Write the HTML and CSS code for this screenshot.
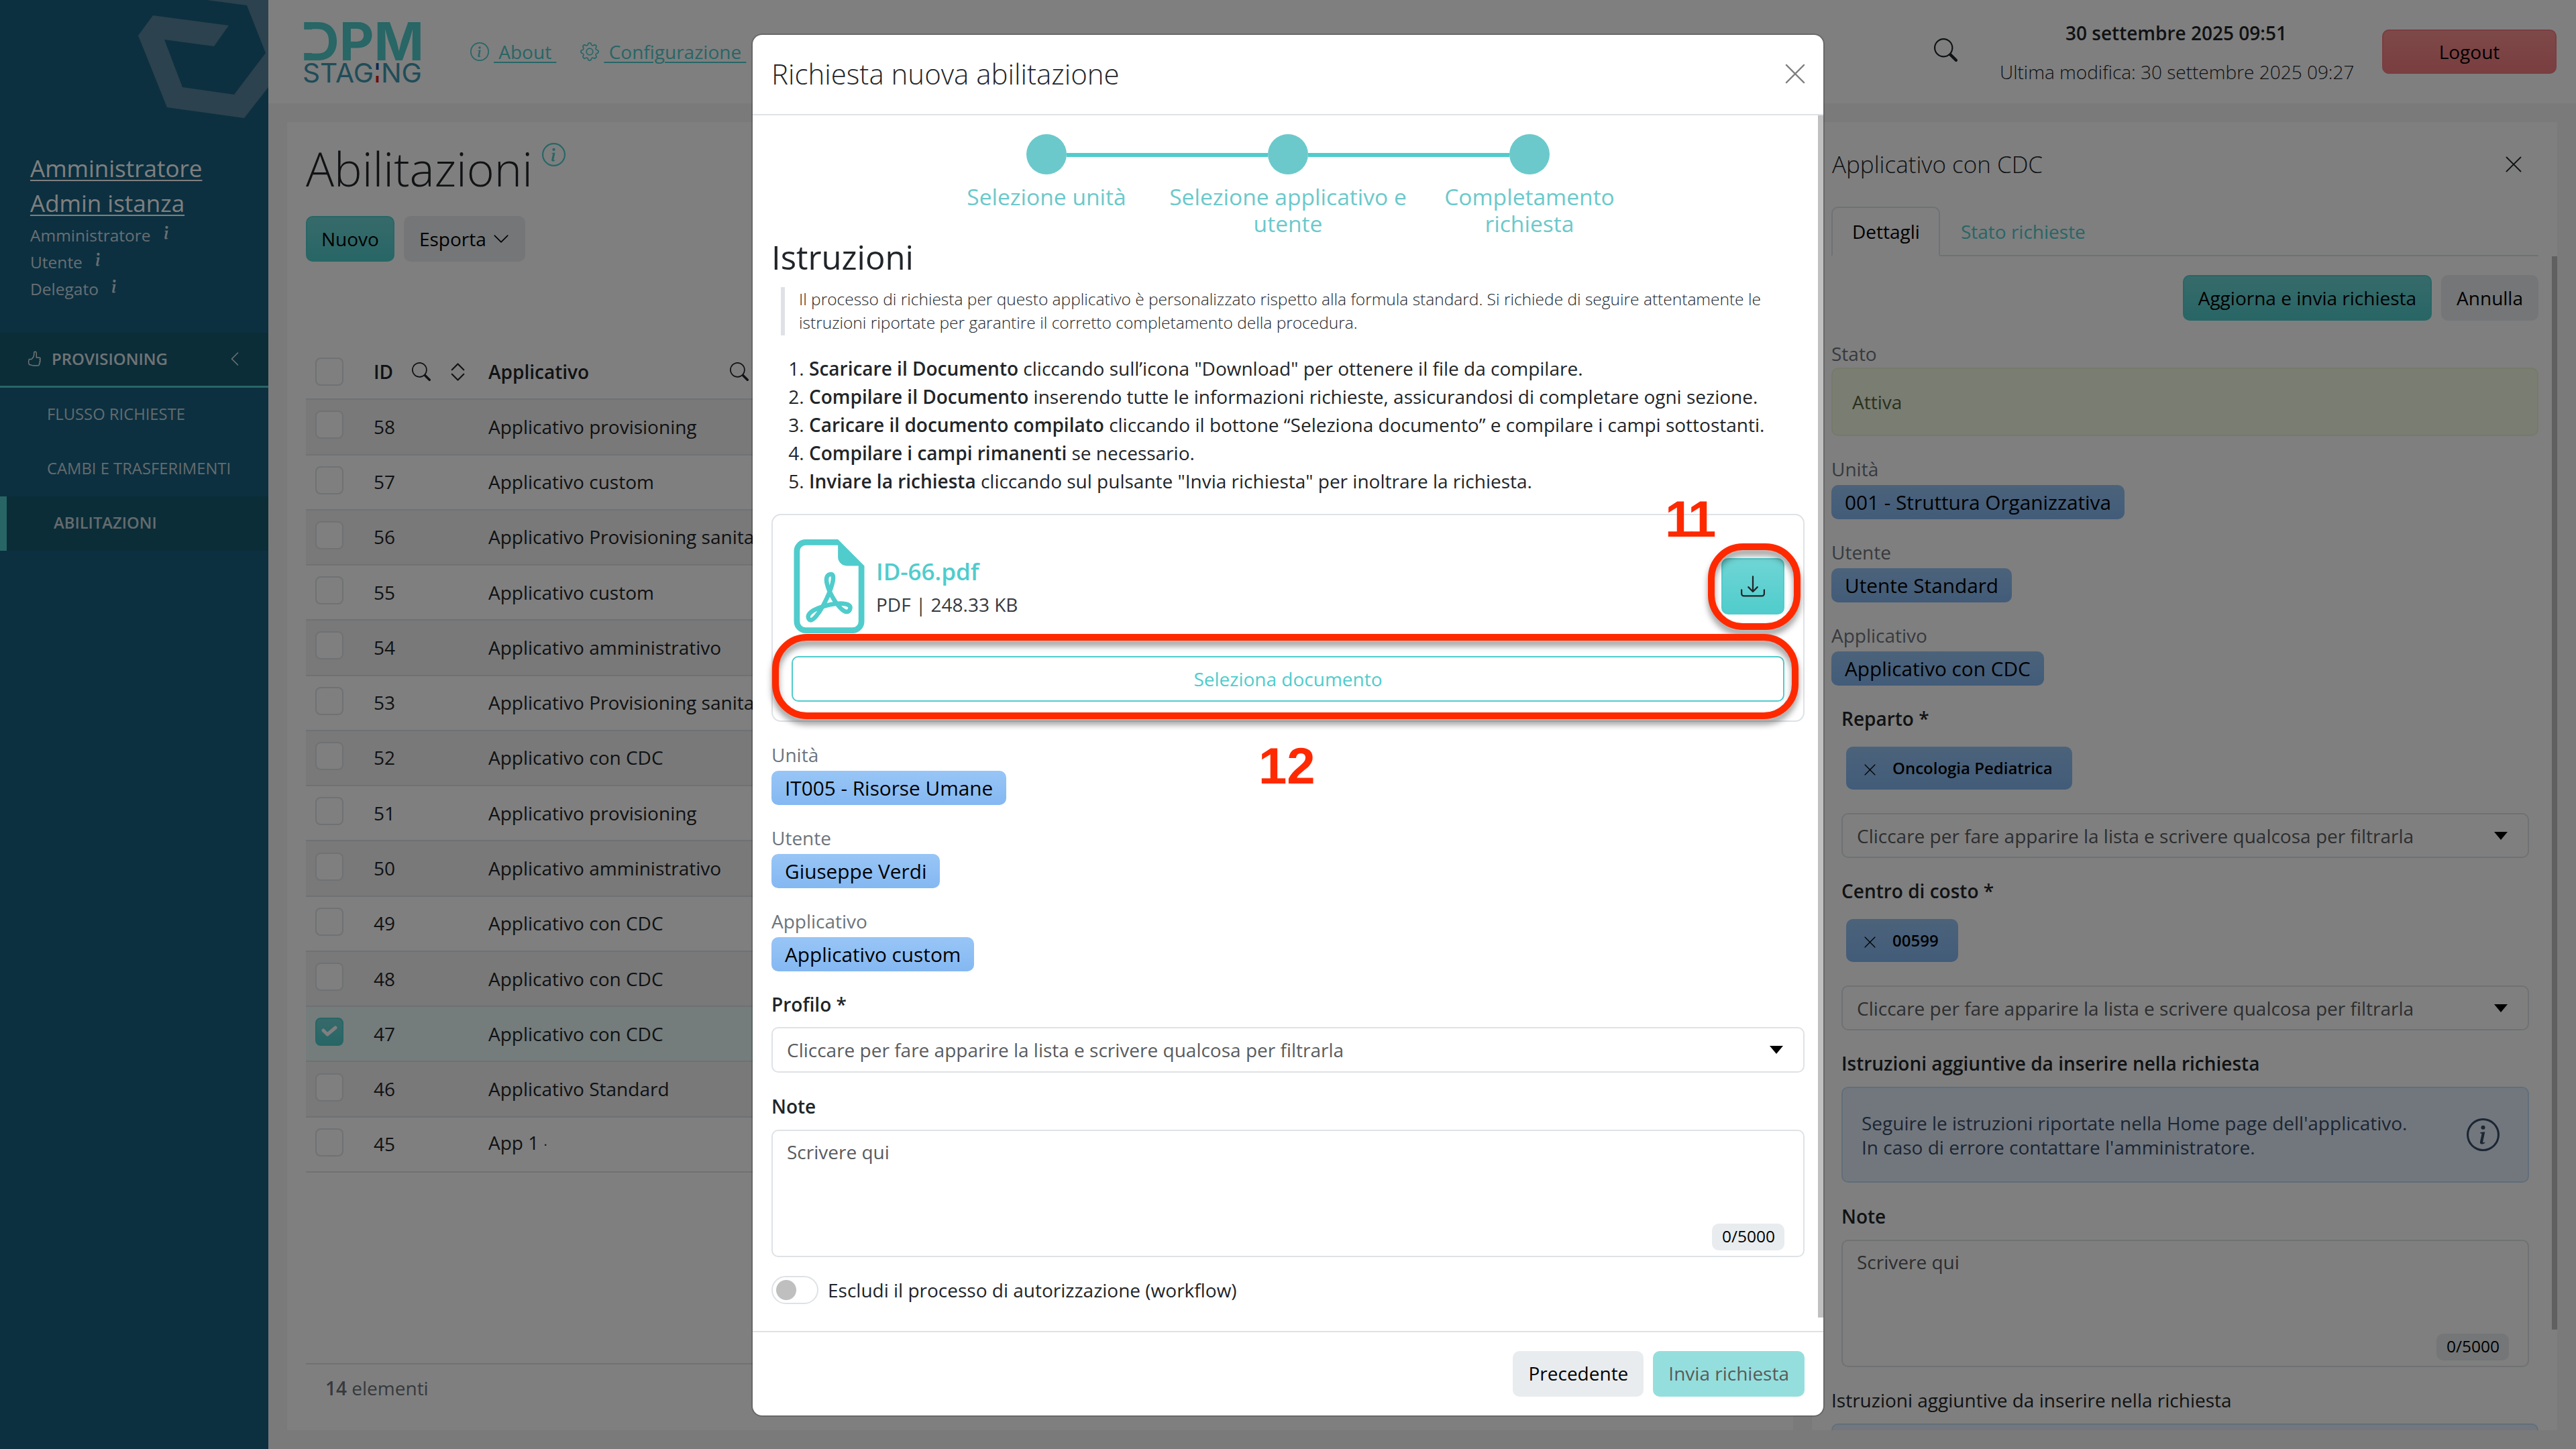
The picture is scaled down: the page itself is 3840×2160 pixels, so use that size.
FILE: index.html
```html
<!DOCTYPE html>
<html lang="it">
<head>
    <meta charset="UTF-8">
    <title>Abilitazioni</title>
    <link rel="stylesheet" href="styles.css">
</head>
<body>
    <!-- icon set -->
    <svg class="sprite">
        <symbol id="i-search" viewBox="0 0 16 16"><path d="M11.742 10.344a6.5 6.5 0 1 0-1.397 1.398h-.001q.044.06.098.115l3.85 3.85a1 1 0 0 0 1.415-1.414l-3.85-3.85a1 1 0 0 0-.115-.1zM12 6.5a5.5 5.5 0 1 1-11 0 5.5 5.5 0 0 1 11 0"/></symbol>
        <symbol id="i-info" viewBox="0 0 16 16"><path d="m8.93 6.588-2.29.287-.082.38.45.083c.294.07.352.176.288.469l-.738 3.468c-.194.897.105 1.319.808 1.319.545 0 1.178-.252 1.465-.598l.088-.416c-.2.176-.492.246-.686.246-.275 0-.375-.193-.304-.533zM9 4.5a1 1 0 1 1-2 0 1 1 0 0 1 2 0"/></symbol>
        <symbol id="i-info-circle" viewBox="0 0 16 16"><path d="M8 15A7 7 0 1 1 8 1a7 7 0 0 1 0 14m0 1A8 8 0 1 0 8 0a8 8 0 0 0 0 16"/><path d="m8.93 6.588-2.29.287-.082.38.45.083c.294.07.352.176.288.469l-.738 3.468c-.194.897.105 1.319.808 1.319.545 0 1.178-.252 1.465-.598l.088-.416c-.2.176-.492.246-.686.246-.275 0-.375-.193-.304-.533zM9 4.5a1 1 0 1 1-2 0 1 1 0 0 1 2 0"/></symbol>
        <symbol id="i-gear" viewBox="0 0 16 16"><path d="M8 4.754a3.246 3.246 0 1 0 0 6.492 3.246 3.246 0 0 0 0-6.492M5.754 8a2.246 2.246 0 1 1 4.492 0 2.246 2.246 0 0 1-4.492 0"/><path d="M9.796 1.343c-.527-1.79-3.065-1.79-3.592 0l-.094.319a.873.873 0 0 1-1.255.52l-.292-.16c-1.64-.892-3.433.902-2.54 2.541l.159.292a.873.873 0 0 1-.52 1.255l-.319.094c-1.79.527-1.79 3.065 0 3.592l.319.094a.873.873 0 0 1 .52 1.255l-.16.292c-.892 1.64.901 3.434 2.541 2.54l.292-.159a.873.873 0 0 1 1.255.52l.094.319c.527 1.79 3.065 1.79 3.592 0l.094-.319a.873.873 0 0 1 1.255-.52l.292.16c1.64.893 3.434-.902 2.54-2.541l-.159-.292a.873.873 0 0 1 .52-1.255l.319-.094c1.79-.527 1.79-3.065 0-3.592l-.319-.094a.873.873 0 0 1-.52-1.255l.16-.292c.893-1.64-.902-3.433-2.541-2.54l-.292.159a.873.873 0 0 1-1.255-.52zm-2.633.283c.246-.835 1.428-.835 1.674 0l.094.319a1.873 1.873 0 0 0 2.693 1.115l.291-.16c.764-.415 1.6.42 1.184 1.185l-.159.292a1.873 1.873 0 0 0 1.116 2.692l.318.094c.835.246.835 1.428 0 1.674l-.319.094a1.873 1.873 0 0 0-1.115 2.693l.16.291c.415.764-.42 1.6-1.185 1.184l-.291-.159a1.873 1.873 0 0 0-2.693 1.116l-.094.318c-.246.835-1.428.835-1.674 0l-.094-.319a1.873 1.873 0 0 0-2.692-1.115l-.292.16c-.764.415-1.6-.42-1.184-1.185l.159-.291A1.873 1.873 0 0 0 1.945 8.93l-.319-.094c-.835-.246-.835-1.428 0-1.674l.319-.094A1.873 1.873 0 0 0 3.06 4.377l-.16-.292c-.415-.764.42-1.6 1.185-1.184l.292.159a1.873 1.873 0 0 0 2.692-1.115z"/></symbol>
        <symbol id="i-sort" viewBox="0 0 16 16"><path d="M3.646 9.146a.5.5 0 0 1 .708 0L8 12.793l3.646-3.647a.5.5 0 0 1 .708.708l-4 4a.5.5 0 0 1-.708 0l-4-4a.5.5 0 0 1 0-.708m0-2.292a.5.5 0 0 0 .708 0L8 3.207l3.646 3.647a.5.5 0 0 0 .708-.708l-4-4a.5.5 0 0 0-.708 0l-4 4a.5.5 0 0 0 0 .708"/></symbol>
        <symbol id="i-down" viewBox="0 0 16 16"><path d="M2 5l6 6 6-6" fill="none" stroke="currentColor" stroke-linecap="round" stroke-linejoin="round"/></symbol>
        <symbol id="i-left" viewBox="0 0 16 16"><path d="M11 2L5 8l6 6" fill="none" stroke="currentColor" stroke-linecap="round" stroke-linejoin="round"/></symbol>
        <symbol id="i-close" viewBox="0 0 16 16"><path d="M1 1l14 14M15 1L1 15" fill="none" stroke="currentColor" stroke-width="1.2" stroke-linecap="round"/></symbol>
        <symbol id="i-caret" viewBox="0 0 20 12"><path d="M0 0h20L10 12z"/></symbol>
        <symbol id="i-thumb" viewBox="0 0 20 24"><path d="M2 12.500h3.500c2-1.500 3.200-3.500 3.700-6V3c0-2.500 3.600-2.500 3.600 1v6h4.200c2 0 2 2.400.8 3 1.200.8 1 2.600-.2 3 .8.900.6 2.400-.6 2.800.5 1.400-.2 3.200-2 3.200H8c-2 0-3-1.500-6-1.500-1.200-3-1.200-5.500 0-8z" fill="none" stroke="currentColor" stroke-width="1.500"/></symbol>
        <symbol id="i-download" viewBox="0 0 16 16"><path d="M.5 9.900a.5.5 0 0 1 .5.5v2.500a1 1 0 0 0 1 1h12a1 1 0 0 0 1-1v-2.500a.5.5 0 0 1 1 0v2.500a2 2 0 0 1-2 2H2a2 2 0 0 1-2-2v-2.500a.5.5 0 0 1 .5-.5"/><path d="M7.646 11.854a.5.5 0 0 0 .708 0l3-3a.5.5 0 0 0-.708-.708L8.500 10.293V1.500a.5.5 0 0 0-1 0v8.793L5.354 8.146a.5.5 0 0 0-.708.708z"/></symbol>
        <symbol id="i-pdf" viewBox="0 0 16 16"><path d="M14 14V4.500L9.500 0H4a2 2 0 0 0-2 2v12a2 2 0 0 0 2 2h8a2 2 0 0 0 2-2M9.500 3A1.500 1.500 0 0 0 11 4.500h2V14a1 1 0 0 1-1 1H4a1 1 0 0 1-1-1V2a1 1 0 0 1 1-1h5.500z"/><path d="M4.603 14.087a.8.8 0 0 1-.438-.42c-.195-.388-.13-.776.08-1.102.198-.307.526-.568.897-.787a7.700 7.700 0 0 1 1.482-.645 20 20 0 0 0 1.062-2.227 7.300 7.300 0 0 1-.43-1.295c-.086-.4-.119-.796-.046-1.136.075-.354.274-.672.65-.823.192-.077.4-.12.602-.077a.7.7 0 0 1 .477.365c.088.164.12.356.127.538.007.188-.012.396-.047.614-.084.51-.27 1.134-.52 1.794a11 11 0 0 0 .98 1.686 5.800 5.800 0 0 1 1.334.05c.364.066.734.195.96.465.12.144.193.32.2.518.007.192-.047.382-.138.563a1.040 1.040 0 0 1-.354.416.86.86 0 0 1-.51.138c-.331-.014-.654-.196-.933-.417a5.700 5.700 0 0 1-.911-.95 11.700 11.700 0 0 0-1.997.406 11.300 11.300 0 0 1-1.020 1.510c-.292.35-.609.656-.927.787a.8.8 0 0 1-.58.029m1.379-1.901q-.25.115-.459.238c-.328.194-.541.383-.647.547-.094.145-.096.25-.04.361q.016.032.026.044l.035-.012c.137-.056.355-.235.635-.572a8 8 0 0 0 .45-.606m1.640-1.330a13 13 0 0 1 1.010-.193 12 12 0 0 1-.51-.858 21 21 0 0 1-.5 1.050zm2.446.45q.226.245.435.41c.24.19.407.253.498.256a.1.1 0 0 0 .07-.015.3.3 0 0 0 .094-.125.44.44 0 0 0 .059-.2.1.1 0 0 0-.026-.063c-.052-.062-.2-.152-.518-.209a4 4 0 0 0-.612-.053zM8.078 7.800a7 7 0 0 0 .2-.828q.046-.282.038-.465a.6.6 0 0 0-.032-.198.5.5 0 0 0-.145.040c-.087.035-.158.106-.196.283-.04.192-.03.469.046.822q.036.167.09.346z"/></symbol>
    </svg>

    <div class="app">
        <aside class="sidebar">
            <svg class="hex" viewBox="0 0 400 180"><path d="M228 23L341 38L319 69L245 59L272 130L349 141L396 79L368 8L308 0H400V130L364 176L249 160L206 53Z"/></svg>
            <div class="user">
                <a href="#">Amministratore</a>
                <a href="#">Admin istanza</a>
                <p>Amministratore <svg><use href="#i-info"/></svg></p>
                <p>Utente <svg><use href="#i-info"/></svg></p>
                <p>Delegato <svg><use href="#i-info"/></svg></p>
            </div>
            <div class="menu-head"><svg class="thumb"><use href="#i-thumb"/></svg>PROVISIONING<svg class="collapse"><use href="#i-left"/></svg></div>
            <ul class="menu">
                <li>FLUSSO RICHIESTE</li>
                <li>CAMBI E TRASFERIMENTI</li>
                <li class="active">ABILITAZIONI</li>
            </ul>
        </aside>

        <div class="main">
            <header class="topbar">
                <svg class="logo" viewBox="0 0 174 92">
                    <defs>
                        <linearGradient id="flag" x1="0" y1="61" x2="0" y2="90" gradientUnits="userSpaceOnUse">
                            <stop offset=".34" stop-color="#1c4fa8"/><stop offset=".34" stop-color="#fff"/>
                            <stop offset=".66" stop-color="#fff"/><stop offset=".66" stop-color="#d61a1a"/>
                        </linearGradient>
                    </defs>
                    <text class="logo-big" x="-5" y="57" textLength="184" lengthAdjust="spacingAndGlyphs">DPM</text>
                    <rect x="-1" y="11" width="17" height="35" fill="#fff"/>
                    <text class="logo-small" x="-2" y="90" textLength="178" lengthAdjust="spacingAndGlyphs">STAG<tspan fill="url(#flag)">I</tspan>NG</text>
                </svg>
                <nav class="topnav">
                    <svg><use href="#i-info-circle"/></svg><a href="#">&nbsp;About&nbsp;</a>
                    <svg class="gear"><use href="#i-gear"/></svg><a href="#">&nbsp;Configurazione&nbsp;</a>
                </nav>
                <svg class="top-search"><use href="#i-search"/></svg>
                <div class="dates">
                    <strong>30 settembre 2025 09:51</strong>
                    <span>Ultima modifica: 30 settembre 2025 09:27</span>
                </div>
                <button class="btn btn-danger">Logout</button>
            </header>

            <div class="content">
                <section class="list-panel">
                    <h1>Abilitazioni <svg><use href="#i-info-circle"/></svg></h1>
                    <div class="toolbar">
                        <button class="btn btn-primary">Nuovo</button>
                        <button class="btn btn-light">Esporta <svg><use href="#i-down"/></svg></button>
                    </div>
                    <div class="table">
                        <div class="row head">
                            <i class="check"></i>
                            <span class="id">ID</span><svg class="s"><use href="#i-search"/></svg><svg class="o"><use href="#i-sort"/></svg>
                            <span class="name">Applicativo</span><svg class="s"><use href="#i-search"/></svg>
                        </div>
                        <div class="row"><i class="check"></i><span class="id">58</span><span>Applicativo provisioning</span></div>
                        <div class="row"><i class="check"></i><span class="id">57</span><span>Applicativo custom</span></div>
                        <div class="row"><i class="check"></i><span class="id">56</span><span>Applicativo Provisioning sanitario</span></div>
                        <div class="row"><i class="check"></i><span class="id">55</span><span>Applicativo custom</span></div>
                        <div class="row"><i class="check"></i><span class="id">54</span><span>Applicativo amministrativo</span></div>
                        <div class="row"><i class="check"></i><span class="id">53</span><span>Applicativo Provisioning sanitario</span></div>
                        <div class="row"><i class="check"></i><span class="id">52</span><span>Applicativo con CDC</span></div>
                        <div class="row"><i class="check"></i><span class="id">51</span><span>Applicativo provisioning</span></div>
                        <div class="row"><i class="check"></i><span class="id">50</span><span>Applicativo amministrativo</span></div>
                        <div class="row"><i class="check"></i><span class="id">49</span><span>Applicativo con CDC</span></div>
                        <div class="row"><i class="check"></i><span class="id">48</span><span>Applicativo con CDC</span></div>
                        <div class="row selected"><i class="check on"><svg viewBox="0 0 24 18"><path d="M3 8l6 6L21 4"/></svg></i><span class="id">47</span><span>Applicativo con CDC</span></div>
                        <div class="row"><i class="check"></i><span class="id">46</span><span>Applicativo Standard</span></div>
                        <div class="row"><i class="check"></i><span class="id">45</span><span>App 1 <small>·</small></span></div>
                    </div>
                    <div class="table-foot"><b>14</b> elementi</div>
                </section>

                <section class="detail-panel">
                    <div class="detail-head"><h2>Applicativo con CDC</h2><svg><use href="#i-close"/></svg></div>
                    <div class="tabs"><span class="tab current">Dettagli</span><span class="tab">Stato richieste</span></div>
                    <div class="detail-body">
                        <div class="actions">
                            <button class="btn btn-primary">Aggiorna e invia richiesta</button>
                            <button class="btn btn-light">Annulla</button>
                        </div>
                        <div class="muted">Stato</div>
                        <div class="alert-ok">Attiva</div>
                        <div class="prop"><div class="muted">Unità</div><span class="badge">001 - Struttura Organizzativa</span></div>
                        <div class="prop"><div class="muted">Utente</div><span class="badge">Utente Standard</span></div>
                        <div class="prop"><div class="muted">Applicativo</div><span class="badge">Applicativo con CDC</span></div>
                        <div class="form">
                            <label>Reparto *</label>
                            <div><span class="chip"><svg><use href="#i-close"/></svg>Oncologia Pediatrica</span></div>
                            <div class="select">Cliccare per fare apparire la lista e scrivere qualcosa per filtrarla<svg><use href="#i-caret"/></svg></div>
                            <label>Centro di costo *</label>
                            <div><span class="chip"><svg><use href="#i-close"/></svg>00599</span></div>
                            <div class="select">Cliccare per fare apparire la lista e scrivere qualcosa per filtrarla<svg><use href="#i-caret"/></svg></div>
                            <label>Istruzioni aggiuntive da inserire nella richiesta</label>
                            <div class="alert-info">
                                <p>Seguire le istruzioni riportate nella Home page dell'applicativo.<br>In caso di errore contattare l'amministratore.</p>
                                <svg><use href="#i-info-circle"/></svg>
                            </div>
                            <label>Note</label>
                            <div class="textarea">Scrivere qui<span class="count">0/5000</span></div>
                        </div>
                        <div class="extra">Istruzioni aggiuntive da inserire nella richiesta</div>
                        <div class="alert-info cut"></div>
                    </div>
                    <div class="scrollbar"></div>
                </section>
            </div>
        </div>
    </div>

    <div class="backdrop">
        <div class="modal">
            <div class="modal-head"><h2>Richiesta nuova abilitazione</h2><svg><use href="#i-close"/></svg></div>
            <div class="modal-body">
                <div class="stepper">
                    <div class="step"><i></i>Selezione unità</div>
                    <div class="step"><i></i>Selezione applicativo e utente</div>
                    <div class="step"><i></i>Completamento richiesta</div>
                </div>
                <h3>Istruzioni</h3>
                <blockquote>Il processo di richiesta per questo applicativo è personalizzato rispetto alla formula standard. Si richiede di seguire attentamente le<br>istruzioni riportate per garantire il corretto completamento della procedura.</blockquote>
                <ol>
                    <li><b>Scaricare il Documento</b> cliccando sull’icona "Download" per ottenere il file da compilare.</li>
                    <li><b>Compilare il Documento</b> inserendo tutte le informazioni richieste, assicurandosi di completare ogni sezione.</li>
                    <li><b>Caricare il documento compilato</b> cliccando il bottone “Seleziona documento” e compilare i campi sottostanti.</li>
                    <li><b>Compilare i campi rimanenti</b> se necessario.</li>
                    <li><b>Inviare la richiesta</b> cliccando sul pulsante "Invia richiesta" per inoltrare la richiesta.</li>
                </ol>
                <div class="file-card">
                    <div class="file">
                        <svg class="pdf"><use href="#i-pdf"/></svg>
                        <div class="file-info"><strong>ID-66.pdf</strong><span>PDF | 248.33 KB</span></div>
                        <button class="btn btn-primary download"><svg><use href="#i-download"/></svg></button>
                    </div>
                    <button class="btn btn-outline">Seleziona documento</button>
                </div>
                <div class="prop"><div class="muted">Unità</div><span class="badge">IT005 - Risorse Umane</span></div>
                <div class="prop"><div class="muted">Utente</div><span class="badge">Giuseppe Verdi</span></div>
                <div class="prop"><div class="muted">Applicativo</div><span class="badge">Applicativo custom</span></div>
                <label>Profilo *</label>
                <div class="select">Cliccare per fare apparire la lista e scrivere qualcosa per filtrarla<svg><use href="#i-caret"/></svg></div>
                <label>Note</label>
                <div class="textarea">Scrivere qui<span class="count">0/5000</span></div>
                <div class="switch-row"><span class="switch"></span>Escludi il processo di autorizzazione (workflow)</div>
                <div class="scrollbar"></div>
            </div>
            <div class="modal-foot">
                <button class="btn btn-light">Precedente</button>
                <button class="btn btn-disabled">Invia richiesta</button>
            </div>
        </div>
    </div>

    <!-- callouts drawn over the dialog -->
    <div class="mark mark-download"></div>
    <div class="mark mark-select"></div>
    <div class="num num-11">11</div>
    <div class="num num-12">12</div>
</body>
</html>
```
FILE: styles.css
```css
* {
    box-sizing: border-box;
}
body {
    margin: 0;
    width: 3840px;
    height: 2160px;
    overflow: hidden;
    position: relative;
    font: 400 28px/42px "Open Sans", "Noto Sans", sans-serif;
    color: #212529;
    background: #f5f5f5;
}
h1, h2, h3, p, ul, ol, blockquote {
    margin: 0;
    padding: 0;
    font-weight: 400;
}
b, strong, label {
    font-weight: 600;
}
svg {
    fill: currentColor;
    flex: none;
    display: block;
}
.sprite {
    display: none;
}
.app {
    display: flex;
    height: 2160px;
}

/* sidebar */
.sidebar {
    width: 400px;
    flex: none;
    background: #186080;
    color: #fff;
}
.hex {
    width: 400px;
    height: 180px;
    color: #58849c;
}
.user {
    height: 316px;
    padding: 45px 0 0 45px;
}
.user a {
    display: block;
    color: #fff;
    font-size: 35px;
    line-height: 52px;
    text-underline-offset: 4px;
    text-decoration-thickness: 2px;
}
.user a + p {
    margin-top: 2px;
}
.user p {
    display: flex;
    font-size: 24.5px;
    line-height: 40px;
    color: #d0dde4;
}
.user svg {
    width: 35px;
    height: 35px;
    margin: -2px 0 0 6px;
}
.menu-head {
    height: 82px;
    display: flex;
    align-items: center;
    padding: 0 38px 1px 41px;
    background: #165a70;
    border-bottom: 3px solid #50cccc;
    font-size: 24px;
    font-weight: 600;
    color: #e0e8ec;
}
.thumb {
    width: 21px;
    height: 24px;
    margin-right: 15px;
}
.collapse {
    width: 24px;
    height: 24px;
    margin-left: auto;
}
.menu {
    list-style: none;
    font-size: 23.8px;
    color: #c8d6dd;
}
.menu li {
    height: 81px;
    line-height: 78px;
    padding-left: 70px;
}
.menu .active {
    border-left: 10px solid #50cccc;
    background: #165a70;
    font-weight: 600;
}

/* top bar */
.main {
    flex: 1;
    min-width: 0;
}
.topbar {
    height: 154px;
    display: flex;
    padding-left: 53px;
    background: #fff;
}
.logo {
    width: 174px;
    height: 92px;
    margin-top: 33px;
    overflow: visible;
}
.logo-big {
    font: 700 79px Inter, sans-serif;
    fill: #52cccc;
}
.logo-small {
    font: 400 40px Inter, sans-serif;
    fill: #3f9ab0;
}
.topnav {
    display: flex;
    align-items: center;
    height: 42px;
    margin: 56px 0 0 74px;
    width: 2182px;
}
.topnav, .topnav a {
    color: #50cccc;
    text-underline-offset: 4px;
    text-decoration-thickness: 2px;
}
.topnav svg {
    width: 28px;
    height: 28px;
    margin-right: 7px;
}
.topnav .gear {
    margin-left: 36px;
}
.top-search {
    width: 35px;
    height: 35px;
    margin-top: 57px;
}
.dates {
    width: 526px;
    margin: 20px 44px 0 63px;
    text-align: center;
    white-space: nowrap;
}
.dates strong, .dates span {
    display: block;
    line-height: 58px;
    font-weight: 300;
}
.dates strong {
    font-weight: 600;
}

/* buttons */
.btn {
    height: 68px;
    padding: 0 21px;
    border: 2px solid transparent;
    border-radius: 10px;
    font: inherit;
    color: #000;
    display: flex;
    align-items: center;
    justify-content: center;
    white-space: nowrap;
}
.btn-primary {
    background: #50cccc linear-gradient(rgba(255, 255, 255, .18), rgba(255, 255, 255, 0)) border-box;
    border-color: #50cccc;
}
.btn-light {
    background: #e9ecef;
}
.btn-danger {
    width: 260px;
    height: 66px;
    margin-top: 44px;
    background: linear-gradient(#fc9292, #f47d80);
    border-color: #f47d80;
}
.btn-outline {
    width: 1480px;
    margin: 34px 0 0 14px;
    background: none;
    border-color: #50cccc;
    color: #50cccc;
}
.btn-disabled {
    background: #94dfdd;
    color: #5a5a5a;
}

/* list */
.content {
    display: flex;
    gap: 28px;
    height: 1950px;
    margin: 28px 28px 0;
}
.list-panel {
    width: 2245px;
    background: #fff;
    padding-left: 28px;
    display: flex;
    flex-direction: column;
}
.list-panel h1 {
    display: flex;
    height: 140px;
    padding-top: 27px;
    font-size: 70px;
    line-height: 84px;
    font-weight: 300;
}
.list-panel h1 svg {
    width: 35px;
    height: 35px;
    margin: 4px 0 0 14px;
    color: #50cccc;
}
.toolbar {
    display: flex;
    gap: 14px;
    height: 68px;
    margin-bottom: 124px;
}
.toolbar svg {
    width: 26px;
    height: 26px;
    margin-left: 9px;
}
.table {
    flex: 1;
}
.row {
    height: 82.28px;
    display: flex;
    align-items: center;
    padding-left: 14px;
    border-bottom: 2px solid #dee2e6;
}
.row:nth-child(even) {
    background: #f2f2f2;
}
.row.selected {
    background: #e8f9f9;
}
.head {
    font-weight: 600;
}
.head .id {
    width: 57px;
}
.head .s {
    width: 28px;
    height: 28px;
}
.head .o {
    width: 35px;
    height: 35px;
    margin: 0 28px 0 23px;
}
.head .name {
    width: 360px;
}
.check {
    width: 42px;
    height: 42px;
    margin: -6px 45px 0 0;
    border: 2px solid #dee2e6;
    border-radius: 8px;
    background: #fff;
}
.head .check {
    margin-top: 0;
}
.check.on {
    background: linear-gradient(#6fd4d4, #50cccc);
    border-color: #50cccc;
    padding: 9px 7px;
}
.check svg {
    width: 24px;
    height: 18px;
    fill: none;
    stroke: #fff;
    stroke-width: 5;
    stroke-linecap: round;
    stroke-linejoin: round;
}
.id {
    width: 171px;
}
.row span {
    padding-bottom: 1px;
}
.row small {
    font-size: 20px;
}
.table-foot {
    height: 100px;
    padding: 14px 29px;
    border-top: 2px solid #dee2e6;
    color: #6c757d;
}

/* detail */
.detail-panel {
    width: 1111px;
    background: #fff;
    position: relative;
    overflow: hidden;
}
.detail-head {
    display: flex;
    justify-content: space-between;
    align-items: center;
    height: 126px;
    padding: 37px 53px 37px 30px;
}
.detail-head h2 {
    font-size: 35px;
    font-weight: 300;
}
.detail-head svg {
    width: 24px;
    height: 24px;
}
.tabs {
    display: flex;
    height: 74px;
    margin: 0 28px 0 29px;
    border-bottom: 2px solid #dee2e6;
}
.tab {
    height: 74px;
    padding: 14px 28px 14px 29px;
    border: 2px solid transparent;
    color: #50cccc;
}
.tab.current {
    color: #000;
    background: #fff;
    border-color: #dee2e6;
    border-bottom-color: #fff;
    border-radius: 10px 10px 0 0;
}
.detail-body {
    padding: 28px 28px 0 29px;
}
.actions {
    display: flex;
    justify-content: flex-end;
    gap: 14px;
    margin-bottom: 28px;
}
.muted {
    color: #6c757d;
}
.alert-ok {
    height: 102px;
    padding: 28px 29px;
    background: #f4fae4;
    border: 2px solid #eaf4d4;
    border-radius: 10px;
    color: #53633a;
    margin-bottom: 28px;
}
.prop {
    height: 124px;
}
.badge {
    display: inline-block;
    height: 51px;
    margin-top: 3px;
    padding: 0 20px;
    font-size: 29.75px;
    line-height: 51px;
    border-radius: 10px;
    background: linear-gradient(#98c5f6, #84b8f2);
    color: #000;
    vertical-align: top;
}
.form {
    padding: 0 14px 0 15px;
}
label {
    display: block;
}
.select {
    display: flex;
    justify-content: space-between;
    align-items: center;
    height: 67px;
    padding: 0 30px 0 21px;
    border: 2px solid #dee2e6;
    border-radius: 10px;
    color: #595c5f;
    margin-bottom: 28px;
}
.select svg {
    width: 20px;
    height: 12px;
    color: #000;
}
.chip {
    display: inline-flex;
    align-items: center;
    height: 64px;
    margin: 21px 0 35px 7px;
    padding: 0 29px 0 27px;
    border-radius: 10px;
    background: linear-gradient(#98c5f6, #84b8f2);
    color: #000;
    font-size: 24px;
    font-weight: 600;
    vertical-align: top;
}
.chip svg {
    width: 17px;
    height: 17px;
    margin: 5px 25px 0 0;
}
.alert-info {
    display: flex;
    align-items: center;
    justify-content: space-between;
    height: 143px;
    margin: 14px 0 29px;
    padding: 0 42px 0 28px;
    border: 2px solid #c4dcf6;
    border-radius: 10px;
    background: #e4eefc;
    color: #384c66;
    line-height: 36px;
}
.alert-info svg {
    width: 49px;
    height: 49px;
}
.textarea {
    position: relative;
    height: 190px;
    margin: 14px 0 28px;
    padding: 10px 21px;
    border: 2px solid #dee2e6;
    border-radius: 10px;
    color: #595c5f;
}
.count {
    position: absolute;
    right: 28px;
    bottom: 8px;
    height: 40px;
    padding: 0 14px 0 15px;
    border-radius: 10px;
    background: #e9ecef;
    color: #000;
    font-size: 24.5px;
    line-height: 37px;
}
.extra {
    color: #212529;
}
.scrollbar {
    position: absolute;
    top: 200px;
    right: 0;
    width: 8px;
    height: 1600px;
    background: #c0c0c0;
}

/* dialog */
.backdrop {
    position: absolute;
    inset: 0;
    padding: 50px 0 0 1120px;
    background: rgba(0, 0, 0, .5);
}
.modal {
    display: flex;
    flex-direction: column;
    width: 1600px;
    height: 2062px;
    border: 2px solid rgba(0, 0, 0, .175);
    border-radius: 16px;
    background: #fff;
    background-clip: padding-box;
}
.modal-head {
    display: flex;
    justify-content: space-between;
    align-items: center;
    height: 120px;
    padding: 0 27px 2px 28px;
    border-bottom: 2px solid #dee2e6;
}
.modal-head h2 {
    font-size: 42px;
    font-weight: 300;
}
.modal-head svg {
    width: 30px;
    height: 30px;
    color: #7f7f7f;
}
.modal-body {
    position: relative;
    flex: 1;
    padding: 28px 28px 0;
}
.modal-body .scrollbar {
    top: 0;
    height: 1792px;
}
.stepper {
    display: flex;
    width: 1080px;
    margin: 0 auto;
    color: #6bc9cb;
    font-size: 33.6px;
    line-height: 40px;
    text-align: center;
}
.step {
    position: relative;
    width: 360px;
}
.step i {
    display: block;
    width: 60px;
    height: 60px;
    margin: 0 auto 13px;
    border-radius: 50%;
    background: #6bc9cb;
}
.step + .step::before {
    content: "";
    position: absolute;
    top: 28px;
    left: -150px;
    width: 300px;
    height: 6px;
    background: #50cccc;
}
.modal h3 {
    font-size: 49px;
    line-height: 61px;
}
blockquote {
    height: 72px;
    margin: 14px 0 28px 14px;
    padding-left: 21px;
    border-left: 6px solid #dee2e6;
    font-size: 24.5px;
    line-height: 35px;
    font-weight: 300;
    white-space: nowrap;
}
ol {
    padding-left: 56px;
    white-space: nowrap;
}
.file-card {
    height: 310px;
    margin: 28px 0;
    padding: 36px 14px 0;
    border: 2px solid #dee2e6;
    border-radius: 14px;
}
.file {
    display: flex;
    height: 140px;
}
.pdf {
    width: 140px;
    height: 140px;
    color: #50cccc;
}
.file-info {
    flex: 1;
    padding-top: 22px;
    color: #343a40;
}
.file-info strong {
    display: block;
    margin-bottom: 2px;
    font-size: 35px;
    line-height: 52px;
    color: #50cccc;
}
.download {
    width: 94px;
    height: 84px;
    margin: 28px 14px 0 0;
    color: #212529;
}
.download svg {
    width: 36px;
    height: 36px;
}
.modal-body .select {
    margin: 13px 0 29px;
    height: 68px;
}
.switch-row {
    display: flex;
}
.switch {
    width: 70px;
    height: 42px;
    margin-right: 14px;
    border: 2px solid #dee2e6;
    border-radius: 21px;
    background: radial-gradient(circle at 20px 19px, #bfbfbf 14.5px, #fff 15.5px);
}
.modal-foot {
    display: flex;
    justify-content: flex-end;
    gap: 14px;
    height: 126px;
    padding: 28px 28px 0;
    border-top: 2px solid #dee2e6;
}
.modal-foot .btn {
    padding-bottom: 2px;
}

/* callouts */
.mark {
    position: absolute;
    border: 10px solid #ff2900;
    border-radius: 52px;
    filter: drop-shadow(0 8px 5px rgba(0, 0, 0, .4));
}
.mark-download {
    left: 2546px;
    top: 810px;
    width: 138px;
    height: 129px;
}
.mark-select {
    left: 1151px;
    top: 945px;
    width: 1530px;
    height: 127px;
}
.num {
    position: absolute;
    color: #ff2900;
    font: 700 76px/80px "Liberation Sans", Arial, sans-serif;
}
.num-11 {
    left: 2482px;
    top: 734px;
    letter-spacing: -4px;
}
.num-12 {
    left: 1876px;
    top: 1102px;
}
```
